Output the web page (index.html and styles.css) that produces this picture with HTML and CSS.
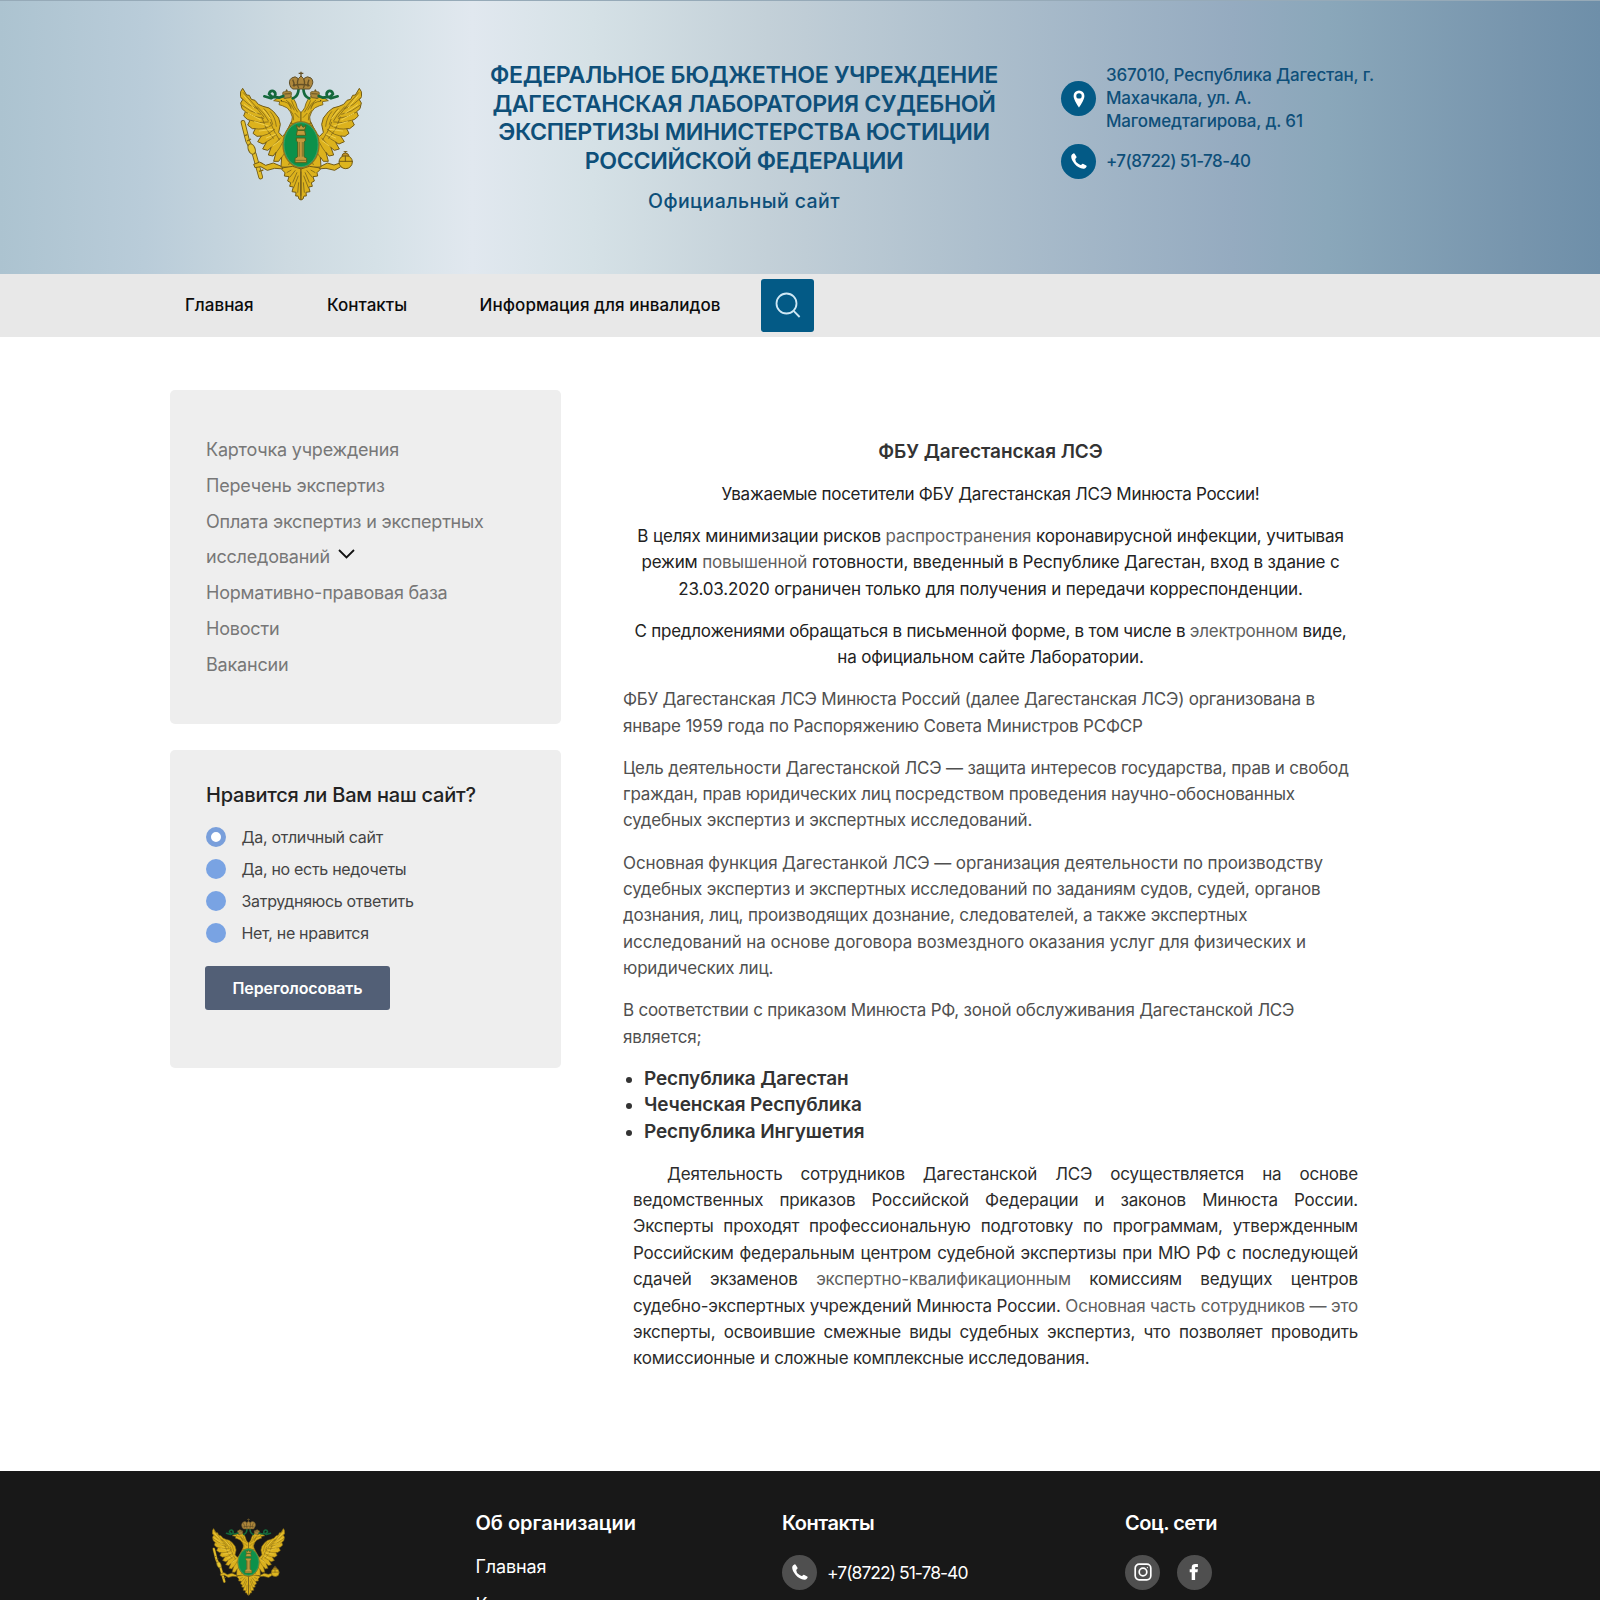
FILE: index.html
```html
<!DOCTYPE html>
<html lang="ru">
<head>
<meta charset="utf-8">
<title>ФБУ Дагестанская ЛСЭ</title>
<link rel="stylesheet" href="styles.css">
</head>
<body>
<svg class="defs" width="0" height="0" aria-hidden="true">
  <defs>
    <g id="half">
      <path fill="#dcb21d" stroke="#725b16" stroke-width="3" stroke-linejoin="round" d="M68 88 L62 98 61 113 68 122 62 132 66 149 76 158 71 171 82 181 90 184 83 198 97 209 106 209 99 223 111 232 124 231 113 248 129 255 139 250 128 270 143 274 153 266 145 288 159 291 168 280 161 307 176 307 185 294 183 324 203 325 225 340 243 330 243 190 214 188 197 223 187 232 176 220 181 196 176 177 161 158 147 147 129 142 115 136 105 124 94 121 88 109 80 108 Z"/>
      <g fill="none" stroke="#765f17" stroke-width="2.2" stroke-linecap="round">
        <path d="M70 101 L104 139 132 174M66 119 Q84 139 113 150M66 139 Q91 160 121 166M78 160 Q102 176 131 178M92 184 Q118 195 145 189M105 209 Q128 214 153 200M123 232 Q142 230 164 211M137 250 Q155 242 170 225M151 268 Q168 253 181 237M166 284 Q180 267 188 250"/>
        <path d="M112 143 Q136 166 145 185M132 149 Q151 168 158 196M151 158 Q166 174 169 202M125 174 L139 210 160 238M151 190 L164 219 179 244M183 298 L195 281M206 317 L213 302"/>
      </g>
      <path fill="none" stroke="#f0d04b" stroke-width="3" stroke-linecap="round" d="M72 110 L101 146M73 137 L111 163M85 163 L121 182M104 188 L145 201M118 216 L158 211M139 237 L168 225M158 261 L181 244M130 154 L151 178"/>
      <path fill="#dcb21d" stroke="#725b16" stroke-width="3" stroke-linejoin="round" d="M191 326 L185 331 195 341 193 351 207 353 203 366 212 371 209 382 220 384 216 398 228 400 227 411 234 411 237 420 243 423 V330 L218 322Z"/>
      <path fill="none" stroke="#755f1a" stroke-width="2.3" d="M200 341 L214 333M209 355 L226 334M218 371 L231 340M221 386 L235 350M233 401 L236 370M243 410 V338"/>
      <path fill="#dcb21d" stroke="#725b16" stroke-width="2.5" d="M161 125 L176 115 Q187 113 196 118 L210 109 222 121 228 133 Q230 147 239 157 L243 160 V194 H214 L217 174 Q213 157 202 147 L187 140 177 137 179 128Z"/>
      <path fill="none" stroke="#806713" stroke-width="2.4" d="M184 127 Q204 127 214 145M198 123 Q215 133 223 154M214 124 Q220 142 233 160M211 154 Q222 164 221 184M224 162 L237 176M205 130 L214 151"/>
      <circle cx="184" cy="125" r="2" fill="#40380d"/>
      <path fill="#ad8a3d" stroke="#655321" stroke-width="2.3" d="M193 118 L188 105 Q187 97 194 98 Q200 91 206 98 Q217 96 214 108 L211 116 Z"/>
      <path d="M200 91 V98M193 105 L212 104" stroke="#655321" stroke-width="3"/>
      <path fill="none" stroke="#14683c" stroke-width="8" stroke-linecap="round" stroke-linejoin="round" d="M236 88 Q235 109 224 115 L218 118M190 111 L177 116 156 113 147 105 Q150 94 160 96 Q169 101 165 112 L153 118 133 112"/>
    </g>
    <symbol id="emblem" viewBox="60 36 366 390">
      <path d="M69 190 L83 246 103 286 122 354" stroke="#715b17" stroke-width="14" stroke-linecap="round" fill="none"/>
      <path d="M69 190 L83 246 103 286 122 354" stroke="#e3be2b" stroke-width="9" stroke-linecap="round" fill="none"/>
      <path d="M72 231 L82 227M81 246 L93 240M112 319 L127 312M117 337 L130 333" stroke="#806519" stroke-width="4"/>
      <ellipse cx="95" cy="270" rx="10" ry="16" transform="rotate(-22 95 270)" fill="#e5c632" stroke="#766018" stroke-width="3"/>
      <path d="M194 330 L164 328 142 334 122 323 105 326 101 316 119 309 137 319 160 312 184 322ZM291 330 L318 328 344 334 362 323 382 328 382 319 360 312 342 318 322 312 302 322Z" fill="#dcb41f" stroke="#735b17" stroke-width="3"/>
      <use href="#half"/>
      <use href="#half" transform="translate(486 0) scale(-1 1)"/>
      <circle cx="377" cy="309" r="20" fill="#ddb51f" stroke="#715b17" stroke-width="3"/>
      <path d="M357 307 H399M376 290 V309M366 291 Q366 283 376 282 Q386 283 387 291ZM376 282 V276M371 278 H382" fill="#c29224" stroke="#765c18" stroke-width="3"/>
      <ellipse cx="243" cy="257" rx="54" ry="69" fill="#0c914b" stroke="#92751d" stroke-width="4"/>
      <ellipse cx="243" cy="257" rx="51" ry="66" fill="none" stroke="#50a86f" stroke-width="2"/>
      <path d="M229 199 L238 205 243 196 249 205 258 199 254 213 H233ZM232 214 H254 L257 229 H229ZM229 237 H256 V246 L252 249 V293 L260 298 V311 H225 V298 L233 293 V249 L229 246Z" fill="#c3993c" stroke="#4b641f" stroke-width="3"/>
      <path d="M238 249 V293M247 249 V293M225 304 H260" stroke="#73702a" stroke-width="2.5"/>
      <path d="M212 84 Q203 66 215 57 Q226 49 235 59 L243 51 251 59 Q262 49 273 57 Q284 68 273 84 L269 90 H218Z" fill="#ae873c" stroke="#60502a" stroke-width="3"/>
      <path d="M218 80 Q243 73 269 80M218 62 Q224 72 222 83M235 59 Q229 73 236 87M251 59 Q257 73 250 87M267 62 Q262 72 264 83M243 38 V54M236 43 H250" fill="none" stroke="#665126" stroke-width="4"/>
    </symbol>
    <symbol id="phone" viewBox="0 0 18 18">
      <path fill="#fff" d="M2.2 2.3 L3.4 1.5 Q4.2 1.1 4.8 1.9 L6.5 4.8 Q6.8 5.5 6.1 6.1 L5.2 6.9 Q5 9.5 8.3 11.8 Q10 13.2 11.1 12.9 L12.1 12 Q12.7 11.5 13.4 11.9 L16.2 13.4 Q17 13.9 16.5 14.7 L15.8 15.8 Q14.9 16.9 13.2 16.7 Q8.5 16.2 4.7 11.9 Q1.1 7.7 1.2 4.6 Q1.2 2.9 2.2 2.3Z"/>
    </symbol>
  </defs>
</svg>

<header class="header">
  <svg class="header-logo"><use href="#emblem"/></svg>
  <div class="header-title">
    <h1>ФЕДЕРАЛЬНОЕ БЮДЖЕТНОЕ УЧРЕЖДЕНИЕ<br>ДАГЕСТАНСКАЯ ЛАБОРАТОРИЯ СУДЕБНОЙ<br>ЭКСПЕРТИЗЫ МИНИСТЕРСТВА ЮСТИЦИИ<br>РОССИЙСКОЙ ФЕДЕРАЦИИ</h1>
    <p>Официальный сайт</p>
  </div>
  <div class="header-contacts">
    <div class="contact">
      <span class="round"><svg width="12" height="18" viewBox="0 0 12 18"><path fill="#fff" fill-rule="evenodd" d="M6 .5 A5.4 5.4 0 0 0 .6 6 C.6 10 6 17.5 6 17.5 S11.4 10 11.4 6 A5.4 5.4 0 0 0 6 .5ZM6 3.2 A2.7 2.7 0 1 1 6 8.6 A2.7 2.7 0 1 1 6 3.2Z"/></svg></span>
      <span>367010, Республика Дагестан, г.<br>Махачкала, ул. А.<br>Магомедтагирова, д. 61</span>
    </div>
    <div class="contact">
      <span class="round"><svg width="18" height="18"><use href="#phone"/></svg></span>
      <span class="tel">+7(8722) 51-78-40</span>
    </div>
  </div>
</header>

<nav class="nav">
  <a>Главная</a><a>Контакты</a><a>Информация для инвалидов</a>
  <span class="search"><svg width="26" height="26" viewBox="0 0 26 26" fill="none" stroke="#cfe8f5" stroke-width="1.8"><circle cx="11.5" cy="11.5" r="10"/><path d="M18.6 18.8 L24.6 25"/></svg></span>
</nav>

<main class="page">
  <aside class="side">
    <section class="card menu">
      <a>Карточка учреждения</a>
      <a>Перечень экспертиз</a>
      <a>Оплата экспертиз и экспертных<br>исследований <svg class="chevron" width="17" height="10" viewBox="0 0 17 10" fill="none" stroke="#111" stroke-width="1.8"><path d="M1 1 L8.5 8.4 L16 1"/></svg></a>
      <a>Нормативно-правовая база</a>
      <a>Новости</a>
      <a>Вакансии</a>
    </section>
    <section class="card poll">
      <h2>Нравится ли Вам наш сайт?</h2>
      <label><i class="radio checked"></i>Да, отличный сайт</label>
      <label><i class="radio"></i>Да, но есть недочеты</label>
      <label><i class="radio"></i>Затрудняюсь ответить</label>
      <label><i class="radio"></i>Нет, не нравится</label>
      <button>Переголосовать</button>
    </section>
  </aside>
  <article class="content">
    <h3>ФБУ Дагестанская ЛСЭ</h3>
    <p class="notice greeting">Уважаемые посетители ФБУ Дагестанская ЛСЭ Минюста России!</p>
    <p class="notice">В целях минимизации рисков <em>распространения</em> коронавирусной инфекции, учитывая<br>режим <em>повышенной</em> готовности, введенный в Республике Дагестан, вход в здание с<br>23.03.2020 ограничен только для получения и передачи корреспонденции.</p>
    <p class="notice"><span class="tight">С предложениями обращаться в письменной форме, в том числе в <em>электронном</em> виде,</span><br>на официальном сайте Лаборатории.</p>
    <p><span class="tight">ФБУ Дагестанская ЛСЭ Минюста Россий (далее Дагестанская ЛСЭ) организована в</span><br>январе 1959 года по Распоряжению Совета Министров РСФСР</p>
    <p>Цель деятельности Дагестанской ЛСЭ — защита интересов государства, прав и свобод<br><span class="tight">граждан, прав юридических лиц посредством проведения научно-обоснованных</span><br>судебных экспертиз и экспертных исследований.</p>
    <p><span class="loose">Основная функция Дагестанкой ЛСЭ — организация деятельности по производству</span><br>судебных экспертиз и экспертных исследований по заданиям судов, судей, органов<br>дознания, лиц, производящих дознание, следователей, а также экспертных<br><span class="looser">исследований на основе договора возмездного оказания услуг для физических и</span><br>юридических лиц.</p>
    <p><span class="tight">В соответствии с приказом Минюста РФ, зоной обслуживания Дагестанской ЛСЭ</span><br>является;</p>
    <ul>
      <li>Республика Дагестан</li>
      <li>Чеченская Республика</li>
      <li>Республика Ингушетия</li>
    </ul>
    <div class="justified">
      <span class="indent">Деятельность сотрудников Дагестанской ЛСЭ осуществляется на основе</span>
      <span>ведомственных приказов Российской Федерации и законов Минюста России.</span>
      <span>Эксперты проходят профессиональную подготовку по программам, утвержденным</span>
      <span>Российским федеральным центром судебной экспертизы при МЮ РФ с последующей</span>
      <span>сдачей экзаменов <em>экспертно-квалификационным</em> комиссиям ведущих центров</span>
      <span>судебно-экспертных учреждений Минюста России. <em>Основная часть сотрудников — это</em></span>
      <span>эксперты, освоившие смежные виды судебных экспертиз, что позволяет проводить</span>
      <span class="last">комиссионные и сложные комплексные исследования.</span>
    </div>
  </article>
</main>

<footer class="footer">
  <svg class="footer-logo"><use href="#emblem"/></svg>
  <div class="fcol about">
    <h4>Об организации</h4>
    <a>Главная</a>
    <a>Контакты</a>
  </div>
  <div class="fcol phones">
    <h4>Контакты</h4>
    <div class="frow"><span class="round gray"><svg width="18" height="18"><use href="#phone"/></svg></span><span class="ftel">+7(8722) 51-78-40</span></div>
  </div>
  <div class="fcol socials">
    <h4>Соц. сети</h4>
    <div class="frow social">
      <span class="round gray"><svg width="18" height="18" viewBox="0 0 18 18" fill="none" stroke="#fff" stroke-width="1.7"><rect x="1.2" y="1.2" width="15.6" height="15.6" rx="4"/><circle cx="9" cy="9" r="3.8"/><circle cx="13.4" cy="4.6" r=".6" fill="#fff" stroke="none"/></svg></span>
      <span class="round gray"><svg width="10" height="18" viewBox="0 0 10 18"><path fill="#fff" d="M2.7 17 V9.3 H.7 V6.2 H2.7 V4.5 C2.7 1.9 4.2 1 6.2 1 H8.9 V4 H7.2 C6.4 4 6.1 4.3 6.1 5 V6.2 H8.9 L8.5 9.3 H6.1 V17Z"/></svg></span>
    </div>
  </div>
</footer>
</body>
</html>
```

FILE: styles.css
```css
* { box-sizing: border-box; }
html, body { margin: 0; padding: 0; }
body {
  width: 1600px;
  height: 1600px;
  overflow: hidden;
  background: #fff;
  color: #333;
  font-family: Inter, "Liberation Sans", sans-serif;
}
h1, h2, h3, h4, p, ul { margin: 0; padding: 0; font-weight: inherit; }
em { font-style: normal; }
svg { display: block; flex: none; }
.defs { display: none; }

.header {
  display: grid;
  grid-template-columns: 122px 580px 340px;
  column-gap: 92px;
  height: 273.5px;
  padding: 60px 0 0 240px;
  border-top: 1px solid #96aab8;
  background: linear-gradient(90deg, #acc3d0 0, #b9ccd9 9%, #cddae1 18%, #d5e1e7 23.5%, #e1e8ef 29.5%, #d5e1e6 37%, #c3d0d8 48%, #adbfcd 61%, #95abc0 77%, #8aa7ba 83%, #7795ad 95%, #6e8fa9 100%);
  color: #0e4f79;
}
.header-logo { width: 122px; height: 130px; margin-top: 10px; }
.header-title { text-align: center; white-space: nowrap; }
.header-title h1 { font-size: 23.2px; font-weight: 600; line-height: 28.5px; letter-spacing: -0.36px; }
.header-title p { margin-top: 13px; font-size: 19.5px; font-weight: 500; line-height: 26px; letter-spacing: .42px; }
.header-contacts { display: flex; flex-direction: column; gap: 10px; margin: 3px 0 0 -65px; }
.contact { display: flex; align-items: center; gap: 10px; min-height: 35px; font-size: 17px; font-weight: 500; line-height: 23.2px; letter-spacing: -0.16px; white-space: nowrap; }
.tel { letter-spacing: -0.58px; }
.round { display: flex; flex: none; align-items: center; justify-content: center; width: 35px; height: 35px; border-radius: 50%; background: #035a86; }

.nav { display: flex; align-items: center; height: 63px; padding-left: 185px; background: #e8e8e8; color: #0c0c0c; font-size: 17px; font-weight: 500; letter-spacing: 0; white-space: nowrap; }
.nav a { margin-right: 73.5px; }
.nav a:nth-of-type(2) { margin-right: 72.5px; }
.nav a:nth-of-type(3) { margin-right: 41px; letter-spacing: .05px; }
.search { display: flex; align-items: center; justify-content: center; width: 53px; height: 53px; border-radius: 3px; background: #035a86; }

.page { display: flex; gap: 62px; height: 1134px; padding: 53px 0 0 170px; }
.side { width: 391px; }
.card { border-radius: 5px; background: #eee; padding: 0 36px; }
.menu { height: 334px; padding-top: 42.5px; color: #777; font-size: 18px; line-height: 35.8px; letter-spacing: -0.2px; }
.menu a { display: block; white-space: nowrap; }
.chevron { display: inline-block; margin-left: 3px; vertical-align: 4px; }
.poll { height: 318px; margin-top: 26px; padding-top: 32px; color: #444; }
.poll h2 { margin-bottom: 13.5px; color: #222; font-size: 20px; font-weight: 500; line-height: 26px; letter-spacing: -0.2px; }
.poll label { display: flex; align-items: center; gap: 15.5px; height: 32px; font-size: 16px; letter-spacing: -0.31px; }
.radio { width: 20px; height: 20px; border-radius: 50%; background: #79a3e3; }
.radio.checked { border: 5px solid #799fdb; background: #fff; }
.poll button { display: block; width: 185px; height: 44px; margin: 16.5px 0 0 -1px; padding: 0; border: 0; border-radius: 3px; background: #525f76; color: #fff; font: 600 16px/44px Inter, sans-serif; letter-spacing: -0.1px; }

.content { width: 735px; padding-top: 49px; color: #505050; font-size: 17px; line-height: 26.4px; letter-spacing: -0.19px; white-space: nowrap; }
.content h3 { color: #333; font-size: 19px; font-weight: 600; line-height: 26.4px; text-align: center; letter-spacing: -0.05px; }
.content p, .content ul { margin-top: 15.7px; }
.content .notice { color: #222; text-align: center; letter-spacing: -0.145px; }
.content .greeting { letter-spacing: -0.27px; }
.content .tight { letter-spacing: -0.235px; }
.content .loose { letter-spacing: -0.11px; }
.content .looser { letter-spacing: -0.06px; }
.content em { color: #606060; }
.content ul { list-style: none; color: #333; font-size: 19px; font-weight: 600; letter-spacing: -0.13px; }
.content li { display: flex; align-items: center; }
.content li::before { content: ""; width: 6px; height: 6px; margin: 2px 12px 0 3px; border-radius: 50%; background: #333; }
.justified { margin: 15.7px 0 0 10px; color: #2c2c2c; }
.justified span { display: block; text-align: justify; text-align-last: justify; white-space: normal; }
.justified .indent { padding-left: 34px; }
.justified .last { text-align-last: left; }

.footer { display: flex; height: 130px; padding: 47px 0 0 212px; background: #181818; color: #fff; }
.footer-logo { width: 73px; height: 78px; }
.fcol { flex: none; white-space: nowrap; }
.about { width: 306.5px; margin-left: 190.5px; }
.phones { width: 343px; }
.fcol h4 { margin-top: -8px; font-size: 20px; font-weight: 600; line-height: 26px; letter-spacing: -0.02px; }
.phones h4, .socials h4 { letter-spacing: -0.5px; }
.fcol a { display: block; font-size: 18px; line-height: 37.5px; letter-spacing: -0.15px; }
.about h4 { margin-bottom: 12.5px; }
.frow { display: flex; align-items: center; gap: 10px; margin-top: 19px; }
.social { gap: 16.5px; }
.gray { background: #4f4f4f; }
.ftel { font-size: 17.5px; letter-spacing: -0.98px; }
```
